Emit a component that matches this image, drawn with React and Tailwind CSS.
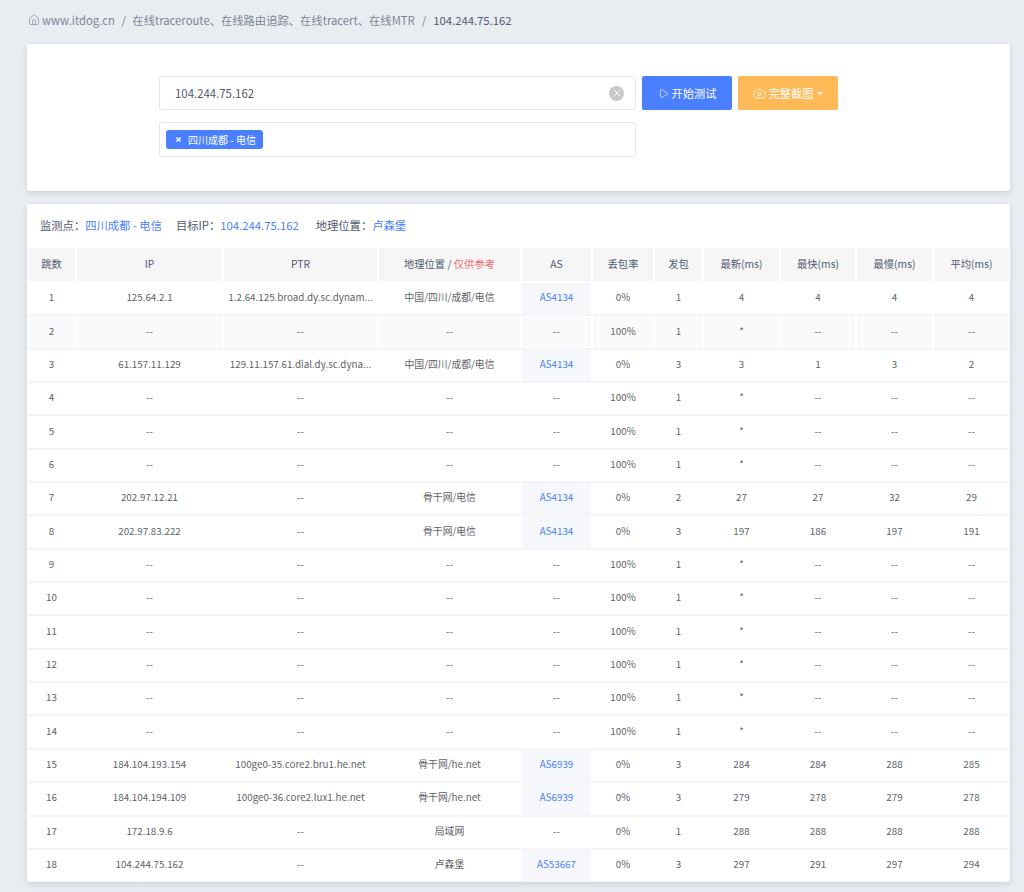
import React from 'react';
import { House, Play, Camera, X } from 'lucide-react';

const D = '--';
const rows = [
  ['1','125.64.2.1','1.2.64.125.broad.dy.sc.dynam...','中国/四川/成都/电信','AS4134','0%','1','4','4','4','4'],
  ['2',D,D,D,D,'100%','1','*',D,D,D],
  ['3','61.157.11.129','129.11.157.61.dial.dy.sc.dyna...','中国/四川/成都/电信','AS4134','0%','3','3','1','3','2'],
  ['4',D,D,D,D,'100%','1','*',D,D,D],
  ['5',D,D,D,D,'100%','1','*',D,D,D],
  ['6',D,D,D,D,'100%','1','*',D,D,D],
  ['7','202.97.12.21',D,'骨干网/电信','AS4134','0%','2','27','27','32','29'],
  ['8','202.97.83.222',D,'骨干网/电信','AS4134','0%','3','197','186','197','191'],
  ['9',D,D,D,D,'100%','1','*',D,D,D],
  ['10',D,D,D,D,'100%','1','*',D,D,D],
  ['11',D,D,D,D,'100%','1','*',D,D,D],
  ['12',D,D,D,D,'100%','1','*',D,D,D],
  ['13',D,D,D,D,'100%','1','*',D,D,D],
  ['14',D,D,D,D,'100%','1','*',D,D,D],
  ['15','184.104.193.154','100ge0-35.core2.bru1.he.net','骨干网/he.net','AS6939','0%','3','284','284','288','285'],
  ['16','184.104.194.109','100ge0-36.core2.lux1.he.net','骨干网/he.net','AS6939','0%','3','279','278','279','278'],
  ['17','172.18.9.6',D,'局域网',D,'0%','1','288','288','288','288'],
  ['18','104.244.75.162',D,'卢森堡','AS53667','0%','3','297','291','297','294'],
];
const widths = [48,147,155,143,71,62,49,77,76,77,76];
const heads = ['跳数','IP','PTR',null,'AS','丢包率','发包','最新(ms)','最快(ms)','最慢(ms)','平均(ms)'];

export default function App() {
  return (
    <div className="w-[1024px] h-[892px] overflow-hidden bg-[#e9edf2] pl-[27px] pr-[14px] font-['Noto_Sans_CJK_SC','Noto_Sans',sans-serif] text-[#606266]">
      <div className="h-[44px] flex items-center pb-[4px] text-[11.3px] text-[#808695]">
        <House size={12} strokeWidth={1.3} className="mr-[2px] ml-[1px]" />
        <span>www.itdog.cn</span>
        <span className="mx-[6.5px]">/</span>
        <span>在线traceroute、在线路由追踪、在线tracert、在线MTR</span>
        <span className="mx-[7px]">/</span>
        <span className="text-[#515a6e]">104.244.75.162</span>
      </div>

      <div className="h-[147px] bg-white rounded-[3px] shadow-[0_2px_6px_rgba(0,0,0,0.12)] pt-[32px] pl-[132px]">
        <div className="flex gap-[6px]">
          <div className="flex flex-col gap-[12px]">
            <div className="w-[477px] h-[34px] border border-[#e4e7ed] rounded-[3px] flex items-center justify-between pl-[15px] pr-[11px] text-[11.4px] text-[#515a6e]">
              <span className="pt-[1px]">104.244.75.162</span>
              <span className="w-[15px] h-[15px] rounded-full bg-[#c8c8c8] flex items-center justify-center text-white"><X size={12} strokeWidth={1.8} /></span>
            </div>
            <div className="w-[477px] h-[35px] border border-[#e4e7ed] rounded-[3px] flex items-center px-[6px]">
              <span className="h-[19px] w-[97px] bg-[#4a80ff] rounded-[3px] text-white text-[10px] flex items-center pl-[9px] pb-[1px] gap-[6px]">
                <X size={7} strokeWidth={4} />
                <span>四川成都 - 电信</span>
              </span>
            </div>
          </div>
          <button className="w-[90px] h-[34px] bg-[#4a80ff] rounded-[2px] text-white text-[11.2px] flex items-center justify-center gap-[3px]">
            <Play size={11} strokeWidth={1.4} />
            <span>开始测试</span>
          </button>
          <button className="w-[100px] h-[34px] bg-[#ffb957] rounded-[2px] text-white text-[11.2px] flex items-center justify-center gap-[3px]">
            <Camera size={13} strokeWidth={1.4} />
            <span>完整截图</span>
            <span className="ml-[1px] border-x-[3px] border-x-transparent border-t-[3px] border-t-white" />
          </button>
        </div>
      </div>

      <div className="mt-[13px] h-[678px] bg-white rounded-[3px] shadow-[0_2px_6px_rgba(0,0,0,0.12)] overflow-hidden">
        <div className="h-[44px] flex items-center pl-[13px] pb-[1px] text-[11.3px] text-[#515a6e]">
          <span>监测点：</span><span className="text-[#4a80ff]">四川成都 - 电信</span>
          <span className="ml-[14px]">目标IP：</span><span className="text-[#4a80ff]">104.244.75.162</span>
          <span className="ml-[17px]">地理位置：</span><span className="text-[#4a80ff]">卢森堡</span>
        </div>
        <table className="table-fixed border-collapse w-[981px] ml-[1px] text-[9.8px] text-center">
          <colgroup>
            {widths.map((w, i) => <col key={i} style={{ width: w }} />)}
          </colgroup>
          <thead>
            <tr>
              {heads.map((h, i) => (
                <th key={i} className="h-[34px] p-0 pb-[2px] text-[10.3px] font-normal bg-[#f6f6f6] border-r-2 border-b-2 border-white last:border-r-0 text-[#515a6e]">
                  {h === null ? <span>地理位置 / <span className="text-[#f56c6c]">仅供参考</span></span> : h}
                </th>
              ))}
            </tr>
          </thead>
          <tbody>
            {rows.map((r) => (
              <tr key={r[0]} className={r[0] === '2' ? 'bg-[#f9fafc]' : ''}>
                {r.map((c, i) => {
                  const as = i === 4 && c !== D;
                  return (
                    <td key={i} className={as
                      ? 'h-[33.35px] p-0 pb-[2px] border-r-2 border-r-white border-b-2 border-b-[#f5f5f5] last:border-r-0 bg-[#f5f7fa] text-[#4a80ff]'
                      : 'h-[33.35px] p-0 pb-[2px] border-r-2 border-r-white border-b-2 border-b-[#f5f5f5] last:border-r-0'}>
                      {c}
                    </td>
                  );
                })}
              </tr>
            ))}
          </tbody>
        </table>
      </div>
    </div>
  );
}
